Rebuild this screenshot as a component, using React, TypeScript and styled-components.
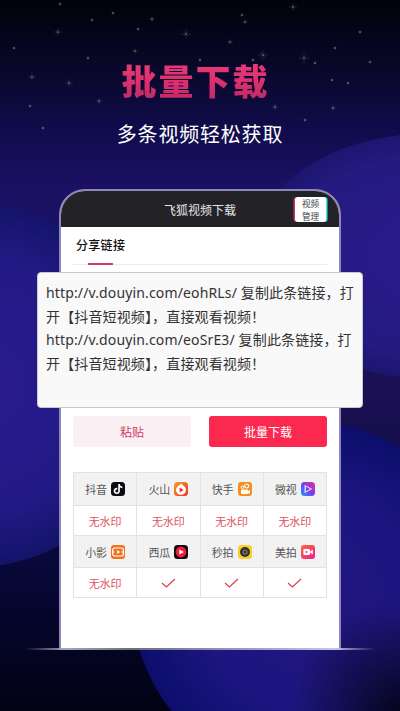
import styled, { createGlobalStyle } from 'styled-components';
import { SiTiktok } from 'react-icons/si';

const CJK = `'Noto Sans CJK SC', 'Noto Sans', sans-serif`;

const STARS: [number, number, number][] = [
  [186, 34, 5], [293, 7, 4], [58, 32, 4], [263, 55, 5], [304, 58, 5], [32, 77, 4], [69, 83, 4], [99, 101, 3],
  [333, 108, 3], [135, 51, 3], [230, 42, 3], [245, 22, 3], [242, 15, 2], [152, 19, 3], [113, 13, 2], [60, 4, 2],
  [92, 20, 2], [138, 29, 2], [332, 80, 2], [275, 107, 3], [348, 83, 2], [360, 32, 2], [335, 48, 2], [315, 63, 2],
  [253, 60, 2], [30, 106, 2], [43, 128, 2], [14, 48, 2], [200, 60, 2], [370, 62, 2], [305, 120, 2], [88, 58, 2],
];

const ROW_A = [
  { name: '抖音', icon: <TikTokIcon /> },
  { name: '火山', icon: <HuoshanIcon /> },
  { name: '快手', icon: <KuaishouIcon /> },
  { name: '微视', icon: <WeishiIcon /> },
];

const ROW_B = [
  { name: '小影', icon: <XiaoyingIcon /> },
  { name: '西瓜', icon: <XiguaIcon /> },
  { name: '秒拍', icon: <MiaopaiIcon /> },
  { name: '美拍', icon: <MeipaiIcon /> },
];

function TikTokIcon() {
  return (
    <AppIcon $bg="#0c0a12">
      <SiTiktok size={10} color="#fff" />
    </AppIcon>
  );
}

function HuoshanIcon() {
  return (
    <svg width="14" height="14" viewBox="0 0 14 14">
      <defs>
        <linearGradient id="huoshan" x1="0" y1="0" x2="1" y2="1">
          <stop offset="0" stopColor="#f8a01e" />
          <stop offset="1" stopColor="#ee2f2a" />
        </linearGradient>
      </defs>
      <rect width="14" height="14" rx="3.5" fill="url(#huoshan)" />
      <path d="M7 1.6 C8 3 12 4.6 12 8 A5 4.8 0 0 1 2 8 C2 5 5.6 3.6 7 1.6 Z" fill="#fff" />
      <path d="M5.6 5.6 L9.6 8 L5.6 10.4 Z" fill="#ee2a3a" />
    </svg>
  );
}

function KuaishouIcon() {
  return (
    <svg width="14" height="14" viewBox="0 0 14 14">
      <rect width="14" height="14" rx="3" fill="#f5901e" />
      <circle cx="8.6" cy="4" r="2" fill="none" stroke="#fff" strokeWidth="1.2" />
      <circle cx="4.4" cy="5.2" r="1.3" fill="none" stroke="#fff" strokeWidth="1" />
      <rect x="3" y="7.6" width="7" height="4.4" rx="1" fill="#fff" />
      <path d="M10 9 L12 8 V12 L10 11 Z" fill="#fff" />
    </svg>
  );
}

function WeishiIcon() {
  return (
    <svg width="14" height="14" viewBox="0 0 14 14">
      <defs>
        <linearGradient id="weishi" x1="0" y1="1" x2="1" y2="0">
          <stop offset="0" stopColor="#1f9bf0" />
          <stop offset="0.5" stopColor="#7b3cf0" />
          <stop offset="1" stopColor="#f02a9a" />
        </linearGradient>
      </defs>
      <rect width="14" height="14" rx="3.5" fill="url(#weishi)" />
      <path d="M3.5 2.8 L11.5 7 L3.5 11.2 Z M5 4.8 V9.2 L9 7 Z" fill="#fff" fillOpacity=".75" fillRule="evenodd" />
    </svg>
  );
}

function XiaoyingIcon() {
  return (
    <svg width="14" height="14" viewBox="0 0 14 14">
      <rect width="14" height="14" rx="3" fill="#f2701e" />
      <rect x="1.6" y="3" width="10.8" height="8" rx="2.2" fill="none" stroke="#fff" strokeWidth="1.2" />
      <path d="M6 5.2 L9.2 7 L6 8.8 Z" fill="#fff" />
      <path d="M1 7 H3.6 M10.4 7 H13" stroke="#fff" strokeWidth="1" />
    </svg>
  );
}

function XiguaIcon() {
  return (
    <svg width="14" height="14" viewBox="0 0 14 14">
      <rect width="14" height="14" rx="3.5" fill="#14090c" />
      <circle cx="7" cy="7" r="5.4" fill="#e8203e" />
      <path d="M5.4 4.4 L9.8 7 L5.4 9.6 Z" fill="#fff" />
    </svg>
  );
}

function MiaopaiIcon() {
  return (
    <svg width="14" height="14" viewBox="0 0 14 14">
      <rect width="14" height="14" rx="3.5" fill="#fbd02a" />
      <circle cx="7" cy="7" r="5" fill="#33312e" />
      <circle cx="7" cy="7" r="2.6" fill="#77756f" />
      <circle cx="7" cy="7" r="1.2" fill="#2a2926" />
    </svg>
  );
}

function MeipaiIcon() {
  return (
    <svg width="14" height="14" viewBox="0 0 14 14">
      <defs>
        <linearGradient id="meipai" x1="0" y1="0" x2="1" y2="1">
          <stop offset="0" stopColor="#fb6a3a" />
          <stop offset="1" stopColor="#f01e8c" />
        </linearGradient>
      </defs>
      <rect width="14" height="14" rx="3" fill="url(#meipai)" />
      <rect x="2.4" y="4" width="6.6" height="6" rx="1" fill="#fff" />
      <path d="M9 6.4 L11.8 4.6 V9.4 L9 7.6 Z" fill="#fff" />
      <path d="M4.6 5.4 L7 7 L4.6 8.6 Z" fill="#f0407a" />
    </svg>
  );
}

const Check = () => (
  <svg width="15" height="10" viewBox="0 0 15 10">
    <path d="M1 5 L5.4 9 L14 1" fill="none" stroke="#e0384f" strokeWidth="1.1" />
  </svg>
);

const StatusRow = ({ checks }: { checks: boolean[] }) => (
  <>
    {checks.map((on, i) => (
      <Cell key={i}>{on ? <Check /> : <Mark>无水印</Mark>}</Cell>
    ))}
  </>
);

const App = () => {
  return (
    <>
      <GlobalStyle />
      <Page>
        <StarField viewBox="0 0 400 140" aria-hidden>
          {STARS.map(([x, y, r], i) => (
            <g key={i} transform={`translate(${x} ${y})`} stroke="#fff" strokeOpacity=".28" strokeWidth=".4">
              <path d={`M${-r} 0 H${r} M0 ${-r} V${r} M${-r / 2} ${-r / 2} L${r / 2} ${r / 2} M${-r / 2} ${r / 2} L${r / 2} ${-r / 2}`} />
              <circle r=".6" fill="#fff" fillOpacity=".45" stroke="none" />
            </g>
          ))}
        </StarField>
        <Title>批量下载</Title>
        <Subtitle>多条视频轻松获取</Subtitle>
        <Phone>
          <PhoneHeader>
            <HeaderTitle>飞狐视频下载</HeaderTitle>
            <ManageBadge>
              视频
              <br />
              管理
            </ManageBadge>
          </PhoneHeader>
          <PhoneBody>
            <TabBar>
              <TabLabel>分享链接</TabLabel>
              <TabIndicator />
            </TabBar>
            <LinkCard>
              <LinkText>http://v.douyin.com/eohRLs/ 复制此条链接，打开【抖音短视频】，直接观看视频！</LinkText>
              <LinkText>http://v.douyin.com/eoSrE3/ 复制此条链接，打开【抖音短视频】，直接观看视频！</LinkText>
            </LinkCard>
            <ButtonRow>
              <PasteButton>粘贴</PasteButton>
              <DownloadButton>批量下载</DownloadButton>
            </ButtonRow>
            <PlatformTable>
              {ROW_A.map(item => (
                <Cell key={item.name} $head>
                  {item.name}
                  {item.icon}
                </Cell>
              ))}
              <StatusRow checks={[false, false, false, false]} />
              {ROW_B.map(item => (
                <Cell key={item.name} $head>
                  {item.name}
                  {item.icon}
                </Cell>
              ))}
              <StatusRow checks={[false, true, true, true]} />
            </PlatformTable>
          </PhoneBody>
          <GroundLine />
        </Phone>
      </Page>
    </>
  );
};

export default App;

const GlobalStyle = createGlobalStyle`
  html, body {
    margin: 0;
    padding: 0;
    background: #05041a;
  }
  * {
    box-sizing: border-box;
  }
`;

const Page = styled.div`
  position: relative;
  width: 400px;
  height: 711px;
  overflow: hidden;
  font-family: ${CJK};
  display: flex;
  flex-direction: column;
  align-items: center;
  padding-top: 56px;
  background:
    radial-gradient(circle 110px at 400px 711px, rgba(0, 0, 0, 0.75) 0, transparent 100%),
    radial-gradient(circle 183px at -28px 385px, #2a1a90 0, #221a85 70%, #14146a 99.4%, transparent 100%),
    radial-gradient(ellipse 180px 123px at 430px 256px, #2b1a8c 0, #241a80 80%, #1c1670 99.4%, transparent 100%),
    radial-gradient(circle 178px at 310px 600px, #23167e 0, #1c1680 60%, #0c0e6c 99.4%, transparent 100%),
    linear-gradient(180deg, #02020a 0, #0a0830 80px, #100c4c 130px, #1c1064 190px, #1a1052 400px, #08083a 560px, #020214 711px);
`;

const StarField = styled.svg`
  position: absolute;
  top: 0;
  left: 0;
  width: 400px;
  height: 140px;
`;

const Title = styled.h1`
  position: relative;
  margin: 0 9px 0 0;
  font-size: 35px;
  line-height: 48px;
  font-weight: 900;
  letter-spacing: 2px;
  background: linear-gradient(180deg, #f03c7c 0, #d82f6c 60%, #b82a66 100%);
  -webkit-background-clip: text;
  background-clip: text;
  color: transparent;
`;

const Subtitle = styled.p`
  position: relative;
  margin: 16px 0 0;
  font-size: 20px;
  line-height: 28px;
  letter-spacing: 0.8px;
  color: #fff;
`;

const Phone = styled.div`
  position: relative;
  margin-top: 41px;
  width: 282px;
  height: 461px;
  display: flex;
  flex-direction: column;
  border: 2px solid #8f86b8;
  border-radius: 26px 26px 0 0;
  background: #fff;
`;

const PhoneHeader = styled.div`
  flex-shrink: 0;
  height: 36px;
  display: flex;
  align-items: center;
  justify-content: center;
  position: relative;
  border-radius: 24px 24px 0 0;
  background: #232327;
`;

const HeaderTitle = styled.span`
  font-size: 12px;
  color: #e6e6e6;
`;

const ManageBadge = styled.div`
  position: absolute;
  top: 6px;
  right: 13px;
  width: 31px;
  height: 25px;
  border-radius: 3px;
  background: #fff;
  box-shadow: -1.5px 0 0 #d0345c, 1.5px 0 0 #3ee6e6;
  font-size: 8.6px;
  line-height: 12.5px;
  text-align: center;
  color: #444;
`;

const PhoneBody = styled.div`
  flex: 1;
  padding: 0 12px;
  display: flex;
  flex-direction: column;
`;

const TabBar = styled.div`
  height: 38px;
  padding: 8px 0 0 3px;
  position: relative;
  border-bottom: 1px solid #ececec;
`;

const TabLabel = styled.span`
  display: block;
  font-size: 12px;
  line-height: 20px;
  letter-spacing: 0.3px;
  font-weight: 500;
  color: #111;
`;

const TabIndicator = styled.i`
  position: absolute;
  left: 15px;
  bottom: -1px;
  width: 25px;
  height: 2px;
  background: #d2406a;
`;

const LinkCard = styled.div`
  margin: 7px -36px 0;
  position: relative;
  height: 136px;
  padding: 8px 7px 8px 8px;
  background: #f9f9f9;
  border: 1px solid #c8c8c8;
  border-radius: 4px;
`;

const LinkText = styled.p`
  margin: 0;
  font-family: 'Noto Sans', 'Noto Sans CJK SC', sans-serif;
  font-size: 14px;
  line-height: 24px;
  letter-spacing: 0.14px;
  color: #333;
  word-break: break-all;

  & + & {
    margin-top: -1.3px;
  }
`;

const ButtonRow = styled.div`
  margin-top: 8px;
  display: flex;
  justify-content: space-between;
`;

const PasteButton = styled.button`
  width: 118px;
  height: 31px;
  border: 0;
  border-radius: 3px;
  padding: 0;
  background: #fbf0f4;
  color: #cf3a63;
  font-family: ${CJK};
  font-size: 12px;
`;

const DownloadButton = styled(PasteButton)`
  background: #fb2850;
  color: #fff;
`;

const PlatformTable = styled.div`
  margin-top: 25px;
  display: grid;
  grid-template-columns: repeat(4, 1fr);
  grid-template-rows: 33px 30px 32px 30px;
  border-top: 1px solid #e2e2e2;
  border-left: 1px solid #e2e2e2;
`;

const Cell = styled.div<{ $head?: boolean }>`
  display: flex;
  align-items: center;
  justify-content: center;
  gap: 4px;
  border-right: 1px solid #e2e2e2;
  border-bottom: 1px solid #e2e2e2;
  background: ${({ $head }) => ($head ? '#f2f2f2' : '#fff')};
  font-size: 11px;
  color: #555;
`;

const Mark = styled.span`
  font-size: 11px;
  color: #e0505e;
`;

const AppIcon = styled.span<{ $bg: string }>`
  width: 14px;
  height: 14px;
  border-radius: 3.5px;
  display: flex;
  align-items: center;
  justify-content: center;
  background: ${({ $bg }) => $bg};
`;

const GroundLine = styled.div`
  position: absolute;
  left: -36px;
  right: -36px;
  bottom: -2px;
  height: 2px;
  background: linear-gradient(90deg, rgba(200, 200, 225, 0) 0, #a8a6b8 12%, #6e6c78 30%, #a8a0d8 70%, #c8c4e0 88%, rgba(200, 200, 225, 0) 100%);
`;
